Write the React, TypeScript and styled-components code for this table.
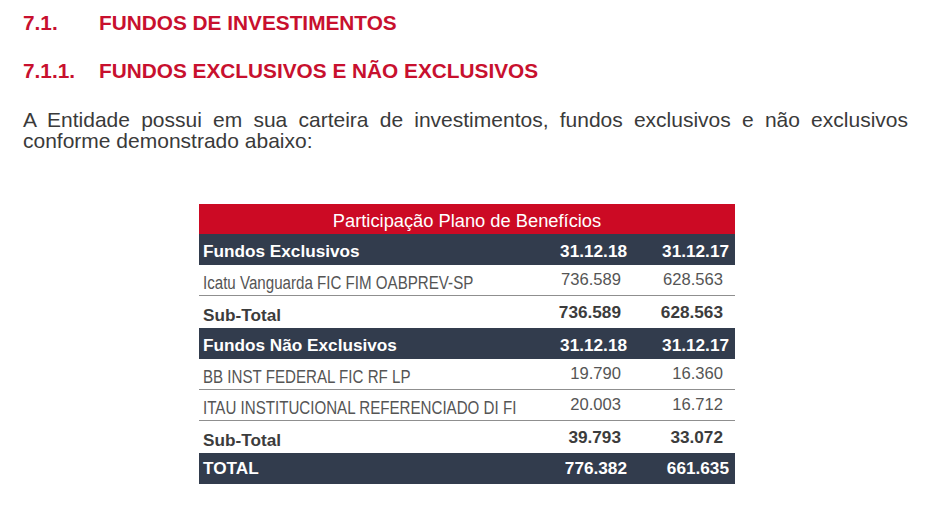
import React from "react";
import styled, { createGlobalStyle } from "styled-components";

const Global = createGlobalStyle`
  html, body { margin: 0; padding: 0; background: #ffffff; }
  body { font-family: "Liberation Sans", Arial, sans-serif; }
`;

const Page = styled.main`
  width: 950px;
  box-sizing: border-box;
  padding: 11px 42px 0 23px;
`;

const Heading = styled.h2<{ $top: number }>`
  margin: ${(p) => p.$top}px 0 0;
  display: flex;
  font-size: 20.8px;
  line-height: 24px;
  font-weight: 700;
  color: #c8102e;
`;

const Num = styled.span`
  width: 76px;
  flex: none;
`;

const Para = styled.p`
  margin: 26px 0 0;
  font-size: 21px;
  line-height: 21px;
  color: #3a3a3a;
  text-align: justify;
`;

const Table = styled.section`
  width: 536px;
  margin: 53px 0 0 176px;
  display: flex;
  flex-direction: column;
`;

const Title = styled.div`
  height: 30px;
  background: #cc0a24;
  color: #ffffff;
  font-size: 18.3px;
  display: flex;
  align-items: center;
  justify-content: center;
  padding-top: 3px;
  box-sizing: border-box;
`;

type Kind = "head" | "data" | "sub" | "total";

const heights: Record<Kind, number> = { head: 31, data: 31, sub: 32, total: 31 };

const textColor: Record<Kind, string> = {
  head: "#ffffff",
  data: "#555555",
  sub: "#3c3c3c",
  total: "#ffffff",
};

const Row = styled.div<{ $kind: Kind }>`
  display: grid;
  grid-template-columns: minmax(0, 1fr) 100px 102px;
  height: ${(p) => heights[p.$kind]}px;
  box-sizing: border-box;
  background: ${(p) => (p.$kind === "head" || p.$kind === "total" ? "#323c4d" : "#ffffff")};
  color: ${(p) => textColor[p.$kind]};
  font-weight: ${(p) => (p.$kind === "data" ? 400 : 700)};
  font-size: ${(p) => (p.$kind === "data" ? "16.6px" : "17.2px")};
  border-bottom: ${(p) => (p.$kind === "data" ? "1px solid #8f8f8f" : "none")};
`;

const Label = styled.div<{ $shift: number }>`
  display: flex;
  align-items: center;
  padding: ${(p) => p.$shift}px 0 0 4px;
  white-space: nowrap;
`;

const Condensed = styled.span`
  display: inline-block;
  font-size: 18px;
  transform: scaleX(0.84);
  transform-origin: left center;
`;

const Value = styled.div<{ $pad: number; $shift: number }>`
  display: flex;
  align-items: center;
  justify-content: flex-end;
  padding: ${(p) => p.$shift}px ${(p) => p.$pad}px 0 0;
`;

type Line = { kind: Kind; label: string; a: string; b: string };

const lines: Line[] = [
  { kind: "head", label: "Fundos Exclusivos", a: "31.12.18", b: "31.12.17" },
  { kind: "data", label: "Icatu Vanguarda FIC FIM OABPREV-SP", a: "736.589", b: "628.563" },
  { kind: "sub", label: "Sub-Total", a: "736.589", b: "628.563" },
  { kind: "head", label: "Fundos Não Exclusivos", a: "31.12.18", b: "31.12.17" },
  { kind: "data", label: "BB INST FEDERAL FIC RF LP", a: "19.790", b: "16.360" },
  { kind: "data", label: "ITAU INSTITUCIONAL REFERENCIADO DI FI", a: "20.003", b: "16.712" },
  { kind: "sub", label: "Sub-Total", a: "39.793", b: "33.072" },
  { kind: "total", label: "TOTAL", a: "776.382", b: "661.635" },
];

const labelShift: Record<Kind, number> = { head: 3, data: 6, sub: 6, total: 0 };
const valueShift: Record<Kind, number> = { head: 3, data: 0, sub: 0, total: 0 };

export default function App() {
  return (
    <>
      <Global />
      <Page>
        <Heading $top={0}>
          <Num>7.1.</Num>
          <span>FUNDOS DE INVESTIMENTOS</span>
        </Heading>
        <Heading $top={24}>
          <Num>7.1.1.</Num>
          <span>FUNDOS EXCLUSIVOS E NÃO EXCLUSIVOS</span>
        </Heading>
        <Para>
          A Entidade possui em sua carteira de investimentos, fundos exclusivos e não exclusivos
          conforme demonstrado abaixo:
        </Para>
        <Table>
          <Title>Participação Plano de Benefícios</Title>
          {lines.map((l, i) => {
            const dark = l.kind === "head" || l.kind === "total";
            return (
              <Row key={i} $kind={l.kind}>
                <Label $shift={labelShift[l.kind]}>
                  {l.kind === "data" ? <Condensed>{l.label}</Condensed> : l.label}
                </Label>
                <Value $pad={dark ? 6 : 12} $shift={valueShift[l.kind]}>{l.a}</Value>
                <Value $pad={dark ? 6 : 12} $shift={valueShift[l.kind]}>{l.b}</Value>
              </Row>
            );
          })}
        </Table>
      </Page>
    </>
  );
}
